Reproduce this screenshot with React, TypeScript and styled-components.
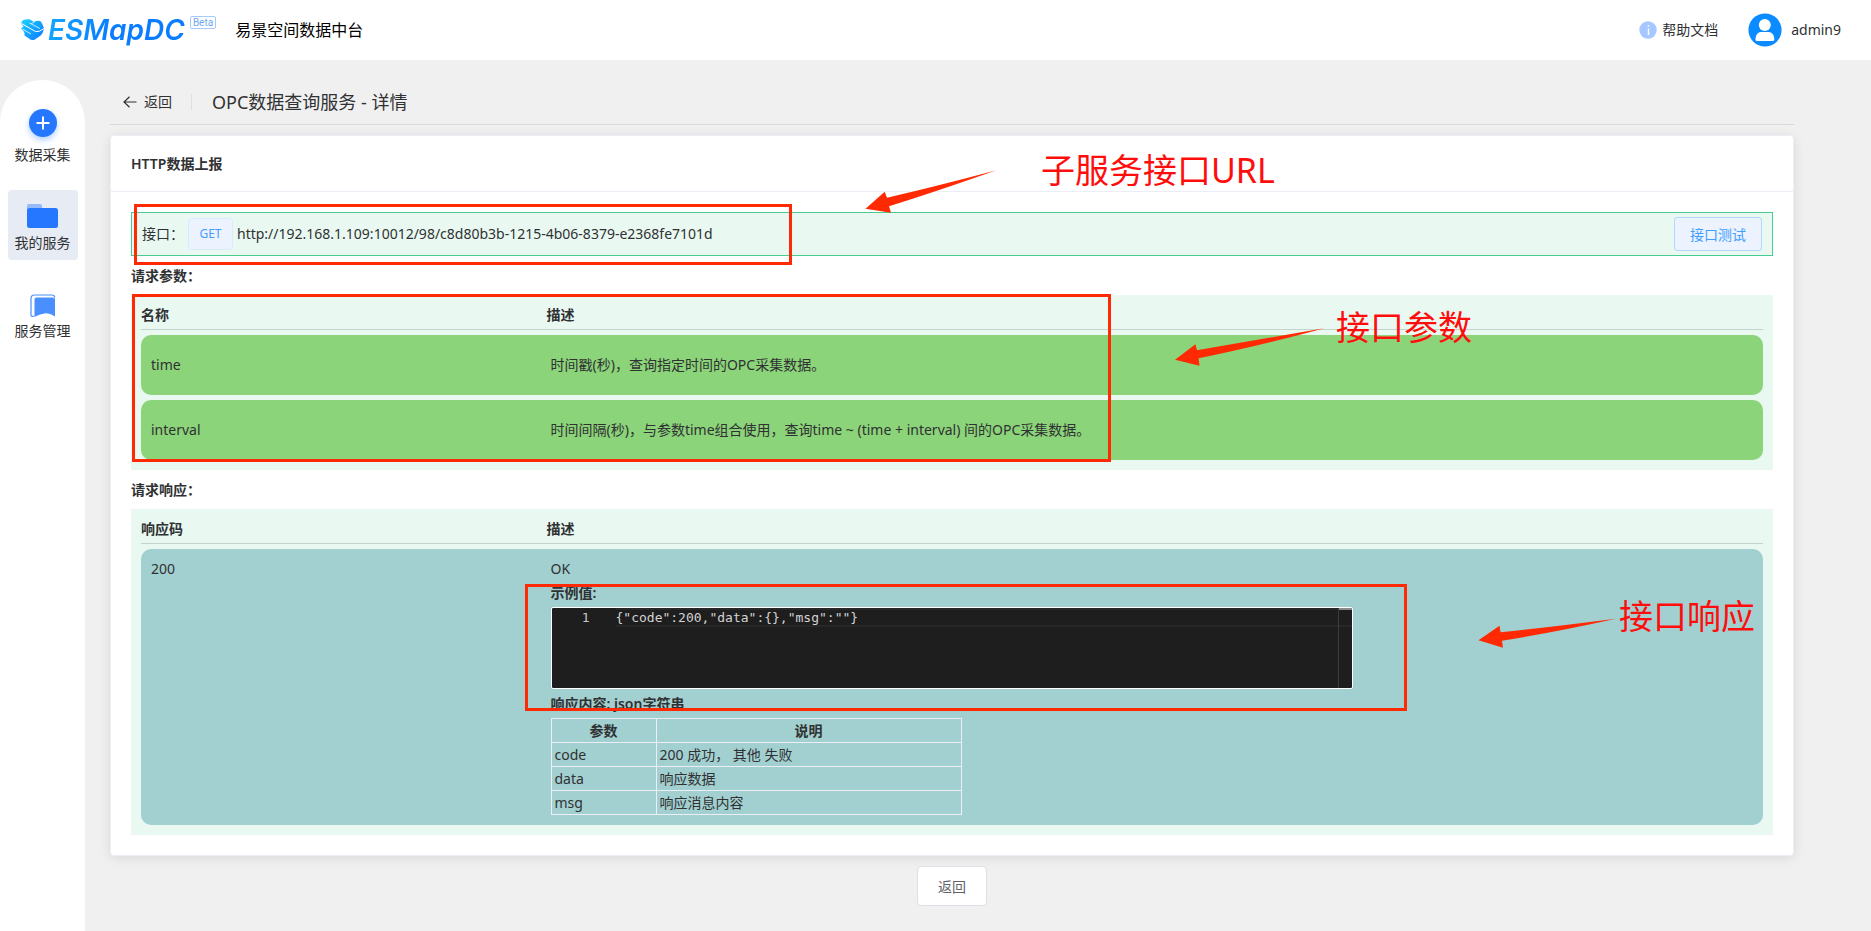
import React from 'react';
import styled, { createGlobalStyle } from 'styled-components';

const GlobalStyle = createGlobalStyle`
  *, *::before, *::after { box-sizing: border-box; }
  body {
    margin: 0;
    background: #f0f0f0;
    color: #303133;
    font-family: "Noto Sans", "Noto Sans CJK SC", sans-serif;
    font-size: 14px;
    line-height: 24px;
  }
  button { font-family: inherit; cursor: pointer; }
`;

const TopBar = styled.header`
  display: flex;
  align-items: center;
  height: 60px;
  padding: 0 30px 0 20px;
  background: #fff;
`;

const Brand = styled.a`
  display: flex;
  align-items: center;
  gap: 3px;
  text-decoration: none;
`;

const BrandName = styled.span`
  font-family: Inter, sans-serif;
  font-size: 28px;
  font-weight: 600;
  font-style: italic;
  line-height: 32px;
  padding-right: 2px;
  color: transparent;
  background: linear-gradient(100deg, #12a8ff 0%, #0a7dff 45%, #0a7dff 100%);
  background-clip: text;
`;

const Beta = styled.span`
  align-self: flex-start;
  height: 13px;
  margin-top: 2px;
  padding: 0 2px;
  border: 1px solid #a5c9fb;
  border-radius: 2px;
  color: #6fa8f5;
  font-family: Roboto, sans-serif;
  font-size: 10px;
  line-height: 11px;
`;

const ProductName = styled.span`
  margin-left: 19px;
  color: #000;
  font-size: 16px;
`;

const HelpLink = styled.a`
  display: flex;
  align-items: center;
  gap: 5px;
  margin-left: auto;
  color: #303133;
  text-decoration: none;
`;

const Account = styled.a`
  display: flex;
  align-items: center;
  gap: 9px;
  margin-left: 30px;
  color: #303133;
  text-decoration: none;
`;

const Body = styled.div`
  display: flex;
  min-height: calc(100vh - 60px);
`;

const SideNav = styled.nav`
  flex: none;
  display: flex;
  flex-direction: column;
  align-items: center;
  gap: 18px;
  width: 85px;
  margin-top: 20px;
  padding-top: 22px;
  background: #fff;
  border-radius: 42px 42px 0 0;
`;

const NavItem = styled.a<{ $active?: boolean }>`
  display: flex;
  flex-direction: column;
  align-items: center;
  justify-content: flex-end;
  gap: 3px;
  width: 70px;
  height: 70px;
  padding-bottom: 5px;
  border-radius: 4px;
  background: ${p => (p.$active ? '#e7ebf3' : 'transparent')};
  color: #303133;
  text-decoration: none;
  svg { overflow: visible; }
`;

const Content = styled.main`
  flex: 1;
  min-width: 0;
  padding: 20px 77px 24px 25px;
`;

const PageHeader = styled.div`
  display: flex;
  align-items: center;
  height: 45px;
  padding-left: 13px;
  border-bottom: 1px solid #d9d9d9;
`;

const BackLink = styled.button`
  display: flex;
  align-items: center;
  gap: 7px;
  padding: 0 19px 0 0;
  border: 0;
  background: none;
  color: #303133;
  font-size: 14px;
  line-height: 24px;
`;

const Divider = styled.span`
  width: 1px;
  height: 16px;
  margin-right: 20px;
  background: #dcdfe6;
`;

const PageTitle = styled.h1`
  margin: 0;
  font-size: 18px;
  font-weight: 400;
`;

const Card = styled.section`
  margin: 10px 0 0;
  background: #fff;
  border: 1px solid #ebeef5;
  border-radius: 4px;
  box-shadow: 0 2px 12px rgba(0, 0, 0, 0.1);
`;

const CardTitle = styled.h2`
  margin: 0;
  padding: 16px 20px 15px;
  border-bottom: 1px solid #ebeef5;
  font-size: 14px;
  font-weight: 600;
  line-height: 24px;
`;

const CardBody = styled.div`
  padding: 20px;
`;

const Block = styled.div`
  position: relative;
`;

const Endpoint = styled.div`
  display: flex;
  align-items: center;
  gap: 4px;
  height: 44px;
  padding: 0 10px;
  border: 1px solid #49cc90;
  background: #e9f9f2;
`;

const Method = styled.span`
  width: 45px;
  height: 32px;
  border: 1px solid #d9ecff;
  border-radius: 4px;
  background: #ecf3ff;
  color: #409eff;
  font-size: 12px;
  line-height: 30px;
  text-align: center;
`;

const TestButton = styled.button`
  width: 88px;
  height: 34px;
  margin-left: auto;
  padding: 0;
  border: 1px solid #b3d8ff;
  border-radius: 3px;
  background: #ecf3ff;
  color: #409eff;
  font-size: 14px;
`;

const SectionLabel = styled.h3`
  margin: 0;
  height: 39px;
  font-size: 14px;
  font-weight: 600;
  line-height: 39px;
`;

const Panel = styled.div`
  padding: 0 10px 5px;
  background: #e9f9f2;
`;

const DataTable = styled.table`
  width: 100%;
  table-layout: fixed;
  border-collapse: separate;
  border-spacing: 0 5px;
  text-align: left;
`;

const HeadCell = styled.th`
  height: 30px;
  padding: 0;
  border-bottom: 1px solid #c5d3cd;
  font-weight: 600;
  &:first-child { width: 25%; }
`;

const DataCell = styled.td<{ $tone: 'green' | 'teal' }>`
  height: 60px;
  padding: ${p => (p.$tone === 'teal' ? '8px 4px 10px' : '0 4px')};
  vertical-align: ${p => (p.$tone === 'teal' ? 'top' : 'middle')};
  background: ${p => (p.$tone === 'teal' ? '#a2cfcf' : '#8bd479')};
  &:first-child { padding-left: 10px; border-radius: 10px 0 0 10px; }
  &:last-child { border-radius: 0 10px 10px 0; }
`;

const Strong = styled.div`
  font-weight: 600;
`;

const Editor = styled.div`
  position: relative;
  display: flex;
  width: 802px;
  max-width: 100%;
  height: 82px;
  margin: 2px 0 3px;
  border: 1px solid #fff;
  border-radius: 2px;
  background: #1e1e1e;
  color: #d4d4d4;
  font-family: "DejaVu Sans Mono", monospace;
  font-size: 13px;
  line-height: 19px;
`;

const LineNumber = styled.span`
  flex: none;
  width: 38px;
  margin-right: 26px;
  color: #c6c6c6;
  text-align: right;
`;

const CodeLine = styled.code`
  flex: 1;
  height: 19px;
  font: inherit;
  line-height: 19px;
  box-shadow: inset 0 2px #282828, inset 0 -2px #282828;
`;

const Ruler = styled.span`
  position: absolute;
  top: 0;
  right: 0;
  bottom: 0;
  width: 14px;
  border-left: 1px solid #3c3c3c;
  &::before {
    content: "";
    display: block;
    height: 2px;
    background: #8a8a8a;
  }
`;

const FieldTable = styled.table`
  width: 411px;
  margin-top: 2px;
  table-layout: fixed;
  border-collapse: collapse;
  line-height: 23px;
  th, td { padding: 0 3px; border: 1px solid #ebeef5; }
  th { font-weight: 600; text-align: center; }
  th:first-child { width: 105px; }
`;

const Footer = styled.div`
  display: flex;
  justify-content: center;
  margin-top: 10px;
`;

const ReturnButton = styled.button`
  width: 70px;
  height: 40px;
  padding: 0;
  border: 1px solid #dcdfe6;
  border-radius: 4px;
  background: #fff;
  color: #606266;
  font-size: 14px;
`;

const Frame = styled.div<{ $x: number; $y: number; $w: number; $h: number }>`
  position: absolute;
  left: ${p => p.$x}px;
  top: ${p => p.$y}px;
  width: ${p => p.$w}px;
  height: ${p => p.$h}px;
  border: 3px solid #ff2a04;
  pointer-events: none;
`;

const Callout = styled.div<{ $x: number; $y: number }>`
  position: absolute;
  left: ${p => p.$x}px;
  top: ${p => p.$y}px;
  display: flex;
  color: #ff0d0d;
  font-size: 34px;
  line-height: 40px;
  white-space: nowrap;
  pointer-events: none;
`;

const Arrow = styled.svg`
  flex: none;
  fill: #ff2a04;
`;

const PlusSvg = styled.svg`
  filter: drop-shadow(0 3px 3px rgba(38, 119, 255, 0.35));
`;

const LogoMark = () => (
  <svg width="25" height="24" viewBox="0 0 25 24" aria-hidden="true">
    <defs>
      <linearGradient id="mark" x1="0" y1="0" x2="1" y2="1">
        <stop offset="0" stopColor="#1fd6ff" />
        <stop offset="1" stopColor="#0a74ff" />
      </linearGradient>
    </defs>
    <g fill="url(#mark)">
      <path d="M2.500 2.500Q6 .5 10 1.500L14 4Q18 2 21 3.500L22.500 6.500L24 10Q23.500 15 20 18L14 22Q11 22.500 9 20.500L4.500 17.500Q5 15 3.500 13L1 10.500L3.500 8.500L1 5.500Z" />
    </g>
    <path d="M1.500 5.500L15.500 13.500Q19 14.500 24 10.500" fill="none" stroke="#fff" strokeWidth="1" />
    <path d="M9.500 5L20 10.500M14 4L11 6M2.500 11L11 16" fill="none" stroke="#d8f1ff" strokeWidth=".9" />
  </svg>
);

const InfoIcon = () => (
  <svg width="18" height="18" viewBox="0 0 18 18" aria-hidden="true">
    <circle cx="9" cy="9" r="8.7" fill="#a6c8ff" />
    <path d="M9.5 7.5V14M9.5 4V5.6" stroke="#fff" strokeWidth="1.4" />
  </svg>
);

const Avatar = () => (
  <svg width="34" height="34" viewBox="0 0 34 34" aria-hidden="true">
    <circle cx="17" cy="17" r="16.6" fill="#0a8bff" />
    <circle cx="16.800" cy="12" r="6" fill="#fff" />
    <path d="M7.500 26.500C7.500 21.500 10 19 13.500 19H20C23.800 19 26.300 21.500 26.300 26.500Q26.300 28 24.800 28H9Q7.500 28 7.500 26.500Z" fill="#fff" />
  </svg>
);

const PlusIcon = () => (
  <PlusSvg width="28" height="32" viewBox="0 0 28 32" aria-hidden="true">
    <circle cx="14" cy="15" r="14" fill="#2677ff" />
    <path d="M14 8.500V21.500M7.500 15H20.500" stroke="#fff" strokeWidth="2" />
  </PlusSvg>
);

const FolderIcon = () => (
  <svg width="32" height="24" viewBox="0 0 32 24" aria-hidden="true">
    <path d="M0 2Q0 0 2 0H13Q15 0 15 2V8H0Z" fill="#94baf8" />
    <rect x="0" y="4" width="31" height="20" rx="2.500" fill="#2677ff" />
  </svg>
);

const BookmarkIcon = () => (
  <svg width="26" height="22" viewBox="0 0 26 22" aria-hidden="true">
    <path d="M4.500 5.500Q4.500 3.500 6.500 3.500H23Q25 3.500 25 5.500V22.500Q18 18.500 14.500 19.500Q9 20 4.500 23Z" fill="#4a8fff" />
    <path d="M24.800 3.500Q24.500 1 22 1H4.500Q1 1 1 4.500V21.500Q2 23 4 22" fill="none" stroke="#4a8fff" strokeWidth="1.200" />
  </svg>
);

const BackArrow = () => (
  <svg width="14" height="12" viewBox="0 0 14 12" fill="none" stroke="#303133" strokeWidth="1.200" aria-hidden="true">
    <path d="M13.500 6H1.200M6.500 .8L1 6L6.500 11.200" />
  </svg>
);

const PARAMS = [
  { name: 'time', desc: '时间戳(秒)，查询指定时间的OPC采集数据。' },
  { name: 'interval', desc: '时间间隔(秒)，与参数time组合使用，查询time ~ (time + interval) 间的OPC采集数据。' },
];

const FIELDS = [
  { name: 'code', desc: '200 成功， 其他 失败' },
  { name: 'data', desc: '响应数据' },
  { name: 'msg', desc: '响应消息内容' },
];

export default function App() {
  return (
    <>
      <GlobalStyle />
      <TopBar lang="zh-CN">
        <Brand href="#">
          <LogoMark />
          <BrandName>ESMapDC</BrandName>
          <Beta>Beta</Beta>
        </Brand>
        <ProductName>易景空间数据中台</ProductName>
        <HelpLink href="#help">
          <InfoIcon />
          帮助文档
        </HelpLink>
        <Account href="#account">
          <Avatar />
          admin9
        </Account>
      </TopBar>
      <Body lang="zh-CN">
        <SideNav>
          <NavItem href="#collect">
            <PlusIcon />
            数据采集
          </NavItem>
          <NavItem href="#services" $active>
            <FolderIcon />
            我的服务
          </NavItem>
          <NavItem href="#manage">
            <BookmarkIcon />
            服务管理
          </NavItem>
        </SideNav>
        <Content>
          <PageHeader>
            <BackLink type="button">
              <BackArrow />
              返回
            </BackLink>
            <Divider />
            <PageTitle>OPC数据查询服务 - 详情</PageTitle>
          </PageHeader>
          <Card>
            <CardTitle>HTTP数据上报</CardTitle>
            <CardBody>
              <Block>
                <Endpoint>
                  <span>接口：</span>
                  <Method>GET</Method>
                  <span>http://192.168.1.109:10012/98/c8d80b3b-1215-4b06-8379-e2368fe7101d</span>
                  <TestButton type="button">接口测试</TestButton>
                </Endpoint>
                <Frame $x={3} $y={-8} $w={658} $h={61} />
                <Callout $x={734} $y={-62}>
                  <Arrow width="176" height="64" viewBox="865 150 176 64">
                    <path d="M865.500 208.700L884.700 191.700L887 197.700Q930 188 996.300 170.300Q935 192 889 206.300L891 212.700Z" />
                  </Arrow>
                  子服务接口URL
                </Callout>
              </Block>
              <SectionLabel>请求参数：</SectionLabel>
              <Block>
                <Panel>
                  <DataTable>
                    <thead>
                      <tr>
                        <HeadCell>名称</HeadCell>
                        <HeadCell>描述</HeadCell>
                      </tr>
                    </thead>
                    <tbody>
                      {PARAMS.map(p => (
                        <tr key={p.name}>
                          <DataCell $tone="green">{p.name}</DataCell>
                          <DataCell $tone="green">{p.desc}</DataCell>
                        </tr>
                      ))}
                    </tbody>
                  </DataTable>
                </Panel>
                <Frame $x={1} $y={-1} $w={979} $h={168} />
                <Callout $x={1044} $y={12}>
                  <Arrow width="161" height="60" viewBox="1175 307 161 60">
                    <path d="M1175 359.700L1195.400 344.300L1197 350.300Q1250 341 1324.500 328.300Q1255 347 1198.600 358.300L1199.500 365.700Z" />
                  </Arrow>
                  接口参数
                </Callout>
              </Block>
              <SectionLabel>请求响应：</SectionLabel>
              <Block>
                <Panel>
                  <DataTable>
                    <thead>
                      <tr>
                        <HeadCell>响应码</HeadCell>
                        <HeadCell>描述</HeadCell>
                      </tr>
                    </thead>
                    <tbody>
                      <tr>
                        <DataCell $tone="teal">200</DataCell>
                        <DataCell $tone="teal">
                          <div>OK</div>
                          <Strong>示例值:</Strong>
                          <Editor>
                            <LineNumber>1</LineNumber>
                            <CodeLine>{'{"code":200,"data":{},"msg":""}'}</CodeLine>
                            <Ruler />
                          </Editor>
                          <Strong>响应内容: json字符串</Strong>
                          <FieldTable>
                            <thead>
                              <tr>
                                <th>参数</th>
                                <th>说明</th>
                              </tr>
                            </thead>
                            <tbody>
                              {FIELDS.map(f => (
                                <tr key={f.name}>
                                  <td>{f.name}</td>
                                  <td>{f.desc}</td>
                                </tr>
                              ))}
                            </tbody>
                          </FieldTable>
                        </DataCell>
                      </tr>
                    </tbody>
                  </DataTable>
                </Panel>
                <Frame $x={394} $y={75} $w={882} $h={127} />
                <Callout $x={1347} $y={87}>
                  <Arrow width="141" height="60" viewBox="1477 596 141 60">
                    <path d="M1477.500 640.300L1498.500 625.700L1499.600 632.300Q1550 627 1614.800 618.700Q1555 632 1501 640.700L1502 647.700Z" />
                  </Arrow>
                  接口响应
                </Callout>
              </Block>
            </CardBody>
          </Card>
          <Footer>
            <ReturnButton type="button">返回</ReturnButton>
          </Footer>
        </Content>
      </Body>
    </>
  );
}
